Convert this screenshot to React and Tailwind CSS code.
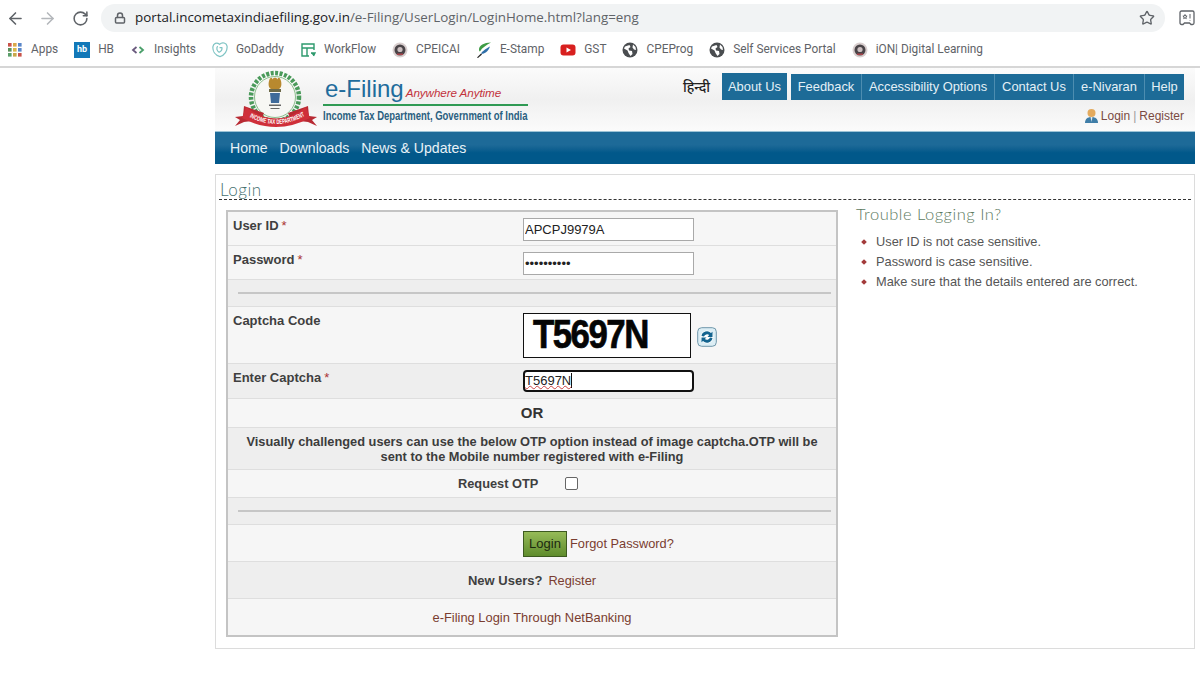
import React from "react";
import { ArrowLeft, ArrowRight, RotateCw, Lock, Star } from "lucide-react";

const Emblem = () => (
  <svg width="16" height="16" viewBox="0 0 16 16">
    <circle cx="8" cy="8" r="7.5" fill="#d9cfcf" />
    <circle cx="8" cy="8" r="5.5" fill="#4a4448" />
    <circle cx="8" cy="7.5" r="2.6" fill="#cbbfc0" />
    <path d="M5 11.5h6v1.5H5z" fill="#a8434a" />
  </svg>
);
const Globe = () => (
  <svg width="16" height="16" viewBox="0 0 16 16">
    <circle cx="8" cy="8" r="7.5" fill="#4a4d50" />
    <path d="M3 4.5 7.5 3l1 2-2 1.5.5 2 3 .5.5 3-2 2-2-3-1-2.5L2 6.5zM11 2.5l2.5 2.5.5 3-2-.5-1.5-2z" fill="#fff" />
  </svg>
);
const Apps = () => (
  <svg width="14" height="14" viewBox="0 0 14 14">
    {[["#c9534a", 0, 0], ["#d9a84a", 5, 0], ["#5a86c9", 10, 0], ["#5a8f5a", 0, 5], ["#d9b64a", 5, 5], ["#5a86c9", 10, 5], ["#5a9f6a", 0, 10], ["#c9a84a", 5, 10], ["#c9534a", 10, 10]].map(([c, x, y]) => (
      <rect key={x + "-" + y} x={x} y={y} width="3.6" height="3.6" fill={c} />
    ))}
  </svg>
);
const Hb = () => (
  <span className="w-4 h-4 bg-[#1278b8] text-white text-[9px] font-bold flex items-center justify-center leading-none">hb</span>
);
const InsightsIcon = () => (
  <svg width="16" height="16" viewBox="0 0 16 16" fill="none" strokeWidth="1.800">
    <path d="M6.500 5 3 8l3.500 3" stroke="#6a5a7e" />
    <path d="M9.500 5 13 8l-3.500 3" stroke="#4a9f6a" />
  </svg>
);
const GoDaddyIcon = () => (
  <svg width="17" height="17" viewBox="0 0 17 17" fill="none" stroke="#7fc4c4" strokeWidth="1.300">
    <path d="M8.500 16C3 14.500.5 10 1 5.500 1.500 2 5 .5 8 3c3-3 7.500-1.500 8 2 .5 5-2.500 9.500-7.500 11z" />
    <path d="M6 5c-1.500 2-1 5 1.500 6.500 2-1 3.500-3 3-5H8" />
  </svg>
);
const WorkFlowIcon = () => (
  <svg width="16" height="16" viewBox="0 0 16 16" fill="none" stroke="#2e9a6e" strokeWidth="1.400">
    <path d="M14 8V2H2v12h7" />
    <path d="M2 6h12M7 6v8" />
    <path d="M11 11h4l-1.500 3" fill="#2e9a6e" />
  </svg>
);
const EStampIcon = () => (
  <svg width="17" height="18" viewBox="0 0 16 17">
    <path d="M15 1C8 1 3 4 3 8c0 1 .5 2 1 2C6 6 10 4 15 1z" fill="#3e9c45" />
    <path d="M14 5C10 7 6 10 5 12c2 1 7-1 9-7z" fill="#2f6fa8" />
    <path d="M5 12 1 16l1 .5L6 13z" fill="#222" />
  </svg>
);
const YouTube = () => (
  <svg width="16" height="16" viewBox="0 0 16 16">
    <rect x="0.500" y="2.500" width="15" height="11" rx="3" fill="#d8201f" />
    <path d="M6.500 5.500v5L11 8z" fill="#fff" />
  </svg>
);
const Extension = () => (
  <svg width="18" height="18" viewBox="0 0 18 18" fill="none" stroke="#5f6368" strokeWidth="1.300">
    <path d="M2 3.500C2 2.700 2.700 2 3.500 2h11c.8 0 1.500.7 1.500 1.500V14c0 .8-.7 1.500-1.500 1.500H13l-1.500-1.500h-5L5 15.500H3.500C2.700 15.500 2 14.800 2 14z" />
    <path d="m7 5.500.6 1.500 1.500.1-1.200 1 .4 1.500L7 8.800l-1.300.8.400-1.500-1.200-1 1.500-.1zM12 5v4.500M12 11v.6" strokeWidth="1" />
  </svg>
);

const bookmarks = [
  [<Apps />, "Apps"], [<Hb />, "HB"], [<InsightsIcon />, "Insights"], [<GoDaddyIcon />, "GoDaddy"],
  [<WorkFlowIcon />, "WorkFlow"], [<Emblem />, "CPEICAI"], [<EStampIcon />, "E-Stamp"], [<YouTube />, "GST"],
  [<Globe />, "CPEProg"], [<Globe />, "Self Services Portal"], [<Emblem />, "iON| Digital Learning"],
];

const Logo = () => (
  <svg width="84" height="62" viewBox="0 0 84 62">
    <circle cx="41" cy="28" r="24" fill="none" stroke="#4a9a5a" strokeWidth="4.500" strokeDasharray="3 1.500" />
    <circle cx="41" cy="28" r="20.500" fill="#f7f7f4" stroke="#8cbf8c" strokeWidth="1" />
    <path d="M35 12c1-4 3-4 3.500-1.500.5-2.500 4.500-2.500 5 0 .5-2.500 2.500-2.500 3.500 1.500 1 4 0 7-2 8h-8c-2-1-3-4-2-8z" fill="#b8892f" />
    <rect x="35" y="20" width="12" height="3" fill="#6d6a4a" />
    <path d="M36 24h10l-1 10h-8z" fill="#3f6a9a" />
    <path d="M35 35.500h12v1.500H35zM36.500 39h9v1h-9z" fill="#666" />
    <path d="M10 37 30 44l-3 7-17 2-9 4 5-6-5-3 8-1z" fill="#b82a33" />
    <path d="M74 37 54 44l3 7 17 2 9 4-5-6 5-3-8-1z" fill="#b82a33" />
    <path d="M12 38Q42 61 72 38L76 49Q42 67 8 49z" fill="#cf2f3a" />
    <path id="rb" d="M12 46Q42 64 72 46" fill="none" />
    <text fontSize="6.500" fontWeight="700" fill="#fff" fontFamily="'Liberation Sans',sans-serif">
      <textPath href="#rb" startOffset="4" textLength="58" lengthAdjust="spacingAndGlyphs">INCOME TAX DEPARTMENT</textPath>
    </text>
  </svg>
);

const RefreshIcon = () => (
  <svg width="20" height="20" viewBox="0 0 20 20">
    <rect x="0.700" y="0.700" width="18.600" height="18.600" rx="4" fill="#dceef5" stroke="#6f97aa" />
    <circle cx="10" cy="10" r="6.500" fill="#fff" />
    <path d="M4.500 9a5.600 5.600 0 0 1 9.500-3l1.500-1.200V10h-5l1.700-1.900A3.300 3.300 0 0 0 7 9.500z" fill="#14648f" />
    <path d="M15.500 11a5.600 5.600 0 0 1-9.500 3l-1.500 1.200V10.500h5l-1.700 1.600A3.300 3.300 0 0 0 13 10.500z" fill="#14648f" />
  </svg>
);

const Req = () => <span className="text-[#a33] font-normal ml-[3px]">*</span>;
const Row = ({ className = "", children }) => (
  <div className={`border-b border-[#dedede] ${className}`}>{children}</div>
);
const Label = ({ children }) => <div className="w-[295px] pl-[5px] -mt-[2px] text-[13px] font-bold text-[#3f3f3f] shrink-0">{children}</div>;
const Sep = ({ className }) => (
  <Row className={`bg-[#eeeeee] flex items-center pl-[10px] pr-[5px] ${className}`}>
    <div className="h-[2px] w-full bg-[#c6c6c6]" />
  </Row>
);
const field = "w-[171px] h-[23px] border border-[#a9a9a9] bg-white text-[13px] text-[#222] px-[1px] outline-none";

export default function App() {
  return (
    <div className="min-h-[681px] bg-white text-[#333]" style={{ fontFamily: "'Liberation Sans',Arial,sans-serif" }}>
      {/* Browser chrome */}
      <div className="h-[68px] border-b-2 border-[#d6d6d6]">
        <div className="h-9 flex items-center pl-[6px] pr-[4px]">
          <ArrowLeft size={19} strokeWidth={2} className="text-[#5f6368] shrink-0" />
          <ArrowRight size={19} strokeWidth={2} className="text-[#b4b7bb] ml-[13px] shrink-0" />
          <RotateCw size={17} strokeWidth={2.200} className="text-[#5f6368] ml-[15px] shrink-0" />
          <div className="ml-[12px] flex-1 h-7 mt-[-1px] bg-[#f1f3f4] rounded-full flex items-center pl-[13px] pr-[10px]">
            <Lock size={12} strokeWidth={3} className="text-[#5f6368] shrink-0" />
            <div className="ml-[9px] flex-1 text-[13.400px] text-[#5f6368] whitespace-nowrap" style={{ fontFamily: "'Open Sans','Noto Sans',sans-serif" }}>
              <span className="text-[#202124]">portal.incometaxindiaefiling.gov.in</span>/e-Filing/UserLogin/LoginHome.html?lang=eng
            </div>
            <Star size={16} strokeWidth={2} className="text-[#5f6368] shrink-0" />
          </div>
          <div className="ml-[13px] shrink-0"><Extension /></div>
        </div>
        <div className="h-7 flex items-center pl-[7px] gap-4">
          {bookmarks.map(([icon, label]) => (
            <div key={label} className="flex items-center gap-2 text-[11.850px] text-[#5f6368] whitespace-nowrap" style={{ fontFamily: "Roboto,'Noto Sans',sans-serif" }}>
              <span className="w-4 h-4 flex items-center justify-center shrink-0">{icon}</span>
              <span>{label}</span>
            </div>
          ))}
        </div>
      </div>

      <div className="ml-[215px] w-[980px]">
        {/* Header */}
        <div className="h-[64px] flex bg-gradient-to-b from-[#fbfbfb] via-[#f0f0f0] to-[#fbfbfb] border-b border-[#9cc3d6]">
          <div className="w-[19px] shrink-0" />
          <div className="w-[84px] pt-[1px] shrink-0"><Logo /></div>
          <div className="ml-[5px] w-[206px] shrink-0 pt-[7px]">
            <div className="flex items-baseline h-[29px] ml-[2px]">
              <span className="text-[24px] leading-[28px] text-[#1f6c9c]">e-Filing</span>
              <span className="ml-[2px] text-[11.700px] italic text-[#c2323c] whitespace-nowrap tracking-[-0.100px]">Anywhere Anytime</span>
            </div>
            <div className="h-[2px] w-[205px] bg-[#2f9a54]" />
            <div className="text-[13px] leading-[18px] mt-[1px] font-bold text-[#2a5f80] whitespace-nowrap origin-left scale-x-[0.73]">Income Tax Department, Government of India</div>
          </div>
          <div className="flex-1 flex flex-col items-end">
            <div className="flex items-end h-[32px] pr-[11px]">
              <span className="text-[14px] font-medium text-[#222] mr-[12px] mb-[1px]" style={{ fontFamily: "'Noto Sans Devanagari','Noto Sans','Lohit Devanagari',sans-serif" }}>हिन्दी</span>
              <span className="h-[27px] w-[65px] bg-[#1d6b97] text-[#e4f0f6] text-[12.900px] flex items-center justify-center">About Us</span>
              <div className="ml-[4px] flex h-[26px] bg-[#1d6b97] text-[#e4f0f6] text-[12.900px] divide-x divide-[#4d8db0]">
                <span className="w-[71px] flex items-center justify-center">Feedback</span>
                <span className="w-[133px] flex items-center justify-center">Accessibility Options</span>
                <span className="w-[79px] flex items-center justify-center">Contact Us</span>
                <span className="w-[71px] flex items-center justify-center">e-Nivaran</span>
                <span className="w-[39px] flex items-center justify-center">Help</span>
              </div>
            </div>
            <div className="flex items-center mt-[7px] pr-[11px] text-[12px] text-[#7a4a42]">
              <svg width="15" height="16" viewBox="0 0 15 16" className="mr-[2px]">
                <circle cx="7.500" cy="5" r="4" fill="#e3aa5e" />
                <path d="M1 15c0-4 2.500-6 6.500-6s6.500 2 6.500 6z" fill="#3f7ea8" />
                <path d="M6.500 9h2l-1 5z" fill="#e9eef2" />
              </svg>
              <span>Login</span><span className="text-[#999] mx-[3px]">|</span><span>Register</span>
            </div>
          </div>
        </div>
        {/* Nav */}
        <div className="h-[32px] flex items-center gap-3 pl-[15px] pt-[1px] bg-gradient-to-b from-[#1d6a98] from-40% to-[#01588a] to-65% text-[14.100px] text-[#e8f2f7]">
          <span>Home</span><span>Downloads</span><span>News &amp; Updates</span>
        </div>

        {/* Panel */}
        <div className="mt-[10px] h-[475px] border border-[#dcdcdc] px-[3px]">
          <div className="h-[25px] border-b border-dashed border-[#333] flex items-end">
            <span className="text-[17px] leading-[18px] ml-[1px] text-[#46706f] font-light tracking-[0.500px]" style={{ fontFamily: "Lato,'Open Sans',sans-serif" }}>Login</span>
          </div>
          <div className="flex">
            <div className="ml-[7px] mt-[10px] w-[612px] h-[427px] border-2 border-[#c4c4c4] bg-[#f6f6f6] shrink-0">
              <Row className="h-[34px] flex pt-[6px]">
                <Label>User ID<Req /></Label>
                <input readOnly value="APCPJ9979A" className={field} />
              </Row>
              <Row className="h-[34px] flex pt-[6px]">
                <Label>Password<Req /></Label>
                <input readOnly type="password" value="1234567890" className={field} />
              </Row>
              <Sep className="h-[27px]" />
              <Row className="h-[57px] flex pt-[6px]">
                <Label>Captcha Code</Label>
                <div className="w-[168px] h-[45px] border border-[#111] bg-white pl-[9px] text-[#050505] text-[41px] leading-[41px] font-bold">
                  <span className="inline-block origin-left scale-x-[0.85] tracking-[-1.800px] [-webkit-text-stroke:0.7px_#050505] whitespace-nowrap">T5697N</span>
                </div>
                <div className="ml-[6px] mt-[14px]"><RefreshIcon /></div>
              </Row>
              <Row className="h-[35px] flex pt-[6px] bg-[#eeeeee]">
                <Label>Enter Captcha<Req /></Label>
                <div className="w-[171px] h-[22px] border-2 border-[#111] rounded-[4px] bg-white text-[13px] leading-[18px] text-[#222] overflow-hidden">
                  <span className="underline decoration-wavy decoration-[#c44] decoration-1 underline-offset-0 border-r border-[#111]">T5697N</span>
                </div>
              </Row>
              <Row className="h-[29px] flex items-center justify-center text-[15px] font-bold text-[#333]">OR</Row>
              <Row className="h-[42px] bg-[#eeeeee] flex items-center justify-center text-center text-[12.800px] leading-[15px] font-bold text-[#3c3c3c] px-[10px]">
                Visually challenged users can use the below OTP option instead of image captcha.OTP will be sent to the Mobile number registered with e-Filing
              </Row>
              <Row className="h-[28px] flex items-center pl-[230px] text-[12.800px] font-bold text-[#3f3f3f]">
                <span>Request OTP</span>
                <span className="ml-[27px] w-[13px] h-[13px] border border-[#666] rounded-[2px] bg-white" />
              </Row>
              <Sep className="h-[27px]" />
              <Row className="h-[37px] flex items-center pl-[295px]">
                <span className="w-[44px] h-[26px] border border-[#3d5a20] bg-gradient-to-b from-[#96bb58] to-[#5f8c2c] text-[13px] text-[#1d2a10] flex items-center justify-center mt-[1px]">Login</span>
                <span className="ml-[3px] mt-[2px] text-[12.800px] text-[#7a3d30]">Forgot Password?</span>
              </Row>
              <Row className="h-[37px] bg-[#eeeeee] flex items-center justify-center text-[13px] pt-[1px]">
                <span className="font-bold text-[#3f3f3f]">New Users?</span>
                <span className="ml-[6px] text-[12.800px] text-[#7a3d30]">Register</span>
              </Row>
              <div className="h-[37px] flex items-center justify-center text-[12.900px] text-[#7a3d30]">e-Filing Login Through NetBanking</div>
            </div>
            <div className="ml-[18px] flex-1 pt-[4px]">
              <div className="text-[16.500px] leading-[20px] text-[#5c7a60] font-light tracking-[0.500px]" style={{ fontFamily: "Lato,'Open Sans',sans-serif" }}>Trouble Logging In?</div>
              <ul className="mt-[8px] text-[12.800px] leading-[20px] text-[#555]">
                {["User ID is not case sensitive.", "Password is case sensitive.", "Make sure that the details entered are correct."].map((t) => (
                  <li key={t} className="flex items-center">
                    <span className="ml-[6px] w-[4px] h-[4px] bg-[#a33a3a] rotate-45 shrink-0" />
                    <span className="ml-[10px]">{t}</span>
                  </li>
                ))}
              </ul>
            </div>
          </div>
        </div>
      </div>
    </div>
  );
}
